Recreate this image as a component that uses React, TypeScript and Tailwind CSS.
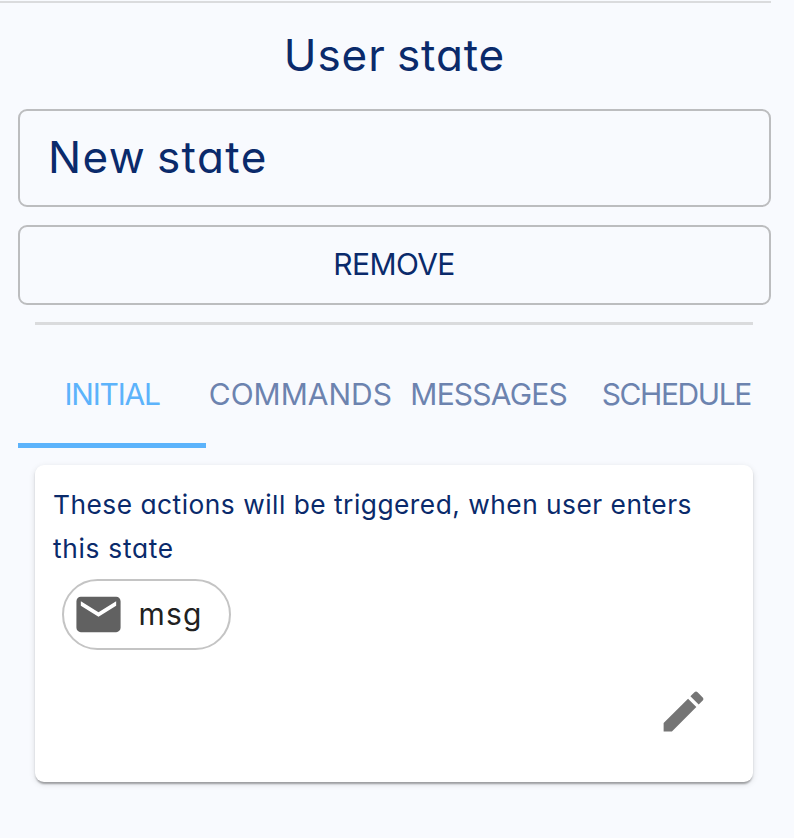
import type { ReactNode } from "react";

const tabs = [
  { label: "INITIAL", spacing: "tracking-[-1.2px]" },
  { label: "COMMANDS", spacing: "tracking-[0px]" },
  { label: "MESSAGES", spacing: "tracking-[-0.8px]" },
  { label: "SCHEDULE", spacing: "tracking-[-1.4px] -ml-px" },
];

function Icon({ className, children }: { className: string; children: ReactNode }) {
  return (
    <svg viewBox="0 0 24 24" fill="currentColor" className={className} aria-hidden="true">
      {children}
    </svg>
  );
}

export default function App() {
  return (
    <main className="h-[838px] w-[794px] overflow-hidden bg-[#f8fafe] pt-px font-['Inter','Liberation_Sans',sans-serif] text-[#0a2a6b] [font-feature-settings:'cv11']">
      <div className="h-0.5 w-[771px] bg-[#dadbdd]" />
      <section className="ml-[18px] flex w-[753px] flex-col">
        <h1 className="flex h-[106px] items-center justify-center pb-0.5 text-[44px] leading-none">
          <span className="tracking-[0.9px] [word-spacing:-2px]">User state</span>
        </h1>
        <div className="flex h-[98px] items-center rounded-[9px] border-2 border-[#bcbdbf] pb-0.5 pl-7 text-[44px] leading-none">
          <span className="tracking-[1.4px] [word-spacing:-3px]">New state</span>
        </div>
        <button className="mt-[18px] flex h-20 items-center justify-center rounded-[9px] border-2 border-[#bcbdbf] pr-px pb-0.5 text-[30px] leading-none">
          <span className="tracking-[-0.6px]">REMOVE</span>
        </button>
        <div className="mr-[18px] ml-[17px] mt-[17px] h-[3px] bg-[#dadbdd]" />
        <nav className="mt-[17px] grid h-[106px] grid-cols-4">
          {tabs.map((tab, i) => (
            <button
              key={tab.label}
              className={`flex items-center justify-center border-b-[5px] pt-0.5 text-[30px] leading-none ${
                i === 0 ? "border-[#5cb3fb] text-[#5cb3fb]" : "border-transparent text-[#6c83af]"
              }`}
            >
              <span className={tab.spacing}>{tab.label}</span>
            </button>
          ))}
        </nav>
        <article className="mr-[18px] ml-[17px] mt-[17px] flex h-[317px] flex-col rounded-[9px] bg-white px-[18px] pt-[18px] shadow-[0_4px_2px_-2px_rgba(0,0,0,0.2),0_2px_2px_rgba(0,0,0,0.14),0_2px_6px_rgba(0,0,0,0.12)]">
          <p className="text-[26.3px] leading-[44px] whitespace-nowrap">
            <span className="tracking-[0.5px]">These actions will be triggered, when user enters</span>
            <br />
            <span className="tracking-[0.7px]">this state</span>
          </p>
          <div className="mt-2 ml-[9px] flex h-[71px] w-[169px] items-center rounded-full border-2 border-[#c4c4c4] pl-2 text-[#212121]">
            <Icon className="size-[53px] text-[#616161]">
              <path d="M20 4H4c-1.1 0-1.99.9-1.99 2L2 18c0 1.1.9 2 2 2h16c1.1 0 2-.9 2-2V6c0-1.1-.9-2-2-2zm0 4-8 5-8-5V6l8 5 8-5v2z" />
            </Icon>
            <span className="ml-[13.5px] pb-0.5 text-[30px] leading-none tracking-[1.2px]">msg</span>
          </div>
          <button className="mt-[35px] mr-[25px] self-end text-[#757575]">
            <Icon className="size-[53px]">
              <path d="M3 17.25V21h3.75L17.81 9.94l-3.75-3.75L3 17.25zM20.71 7.04c.39-.39.39-1.02 0-1.41l-2.34-2.34a.9959.9959 0 0 0-1.41 0l-1.83 1.83 3.75 3.75 1.83-1.83z" />
            </Icon>
          </button>
        </article>
      </section>
    </main>
  );
}
